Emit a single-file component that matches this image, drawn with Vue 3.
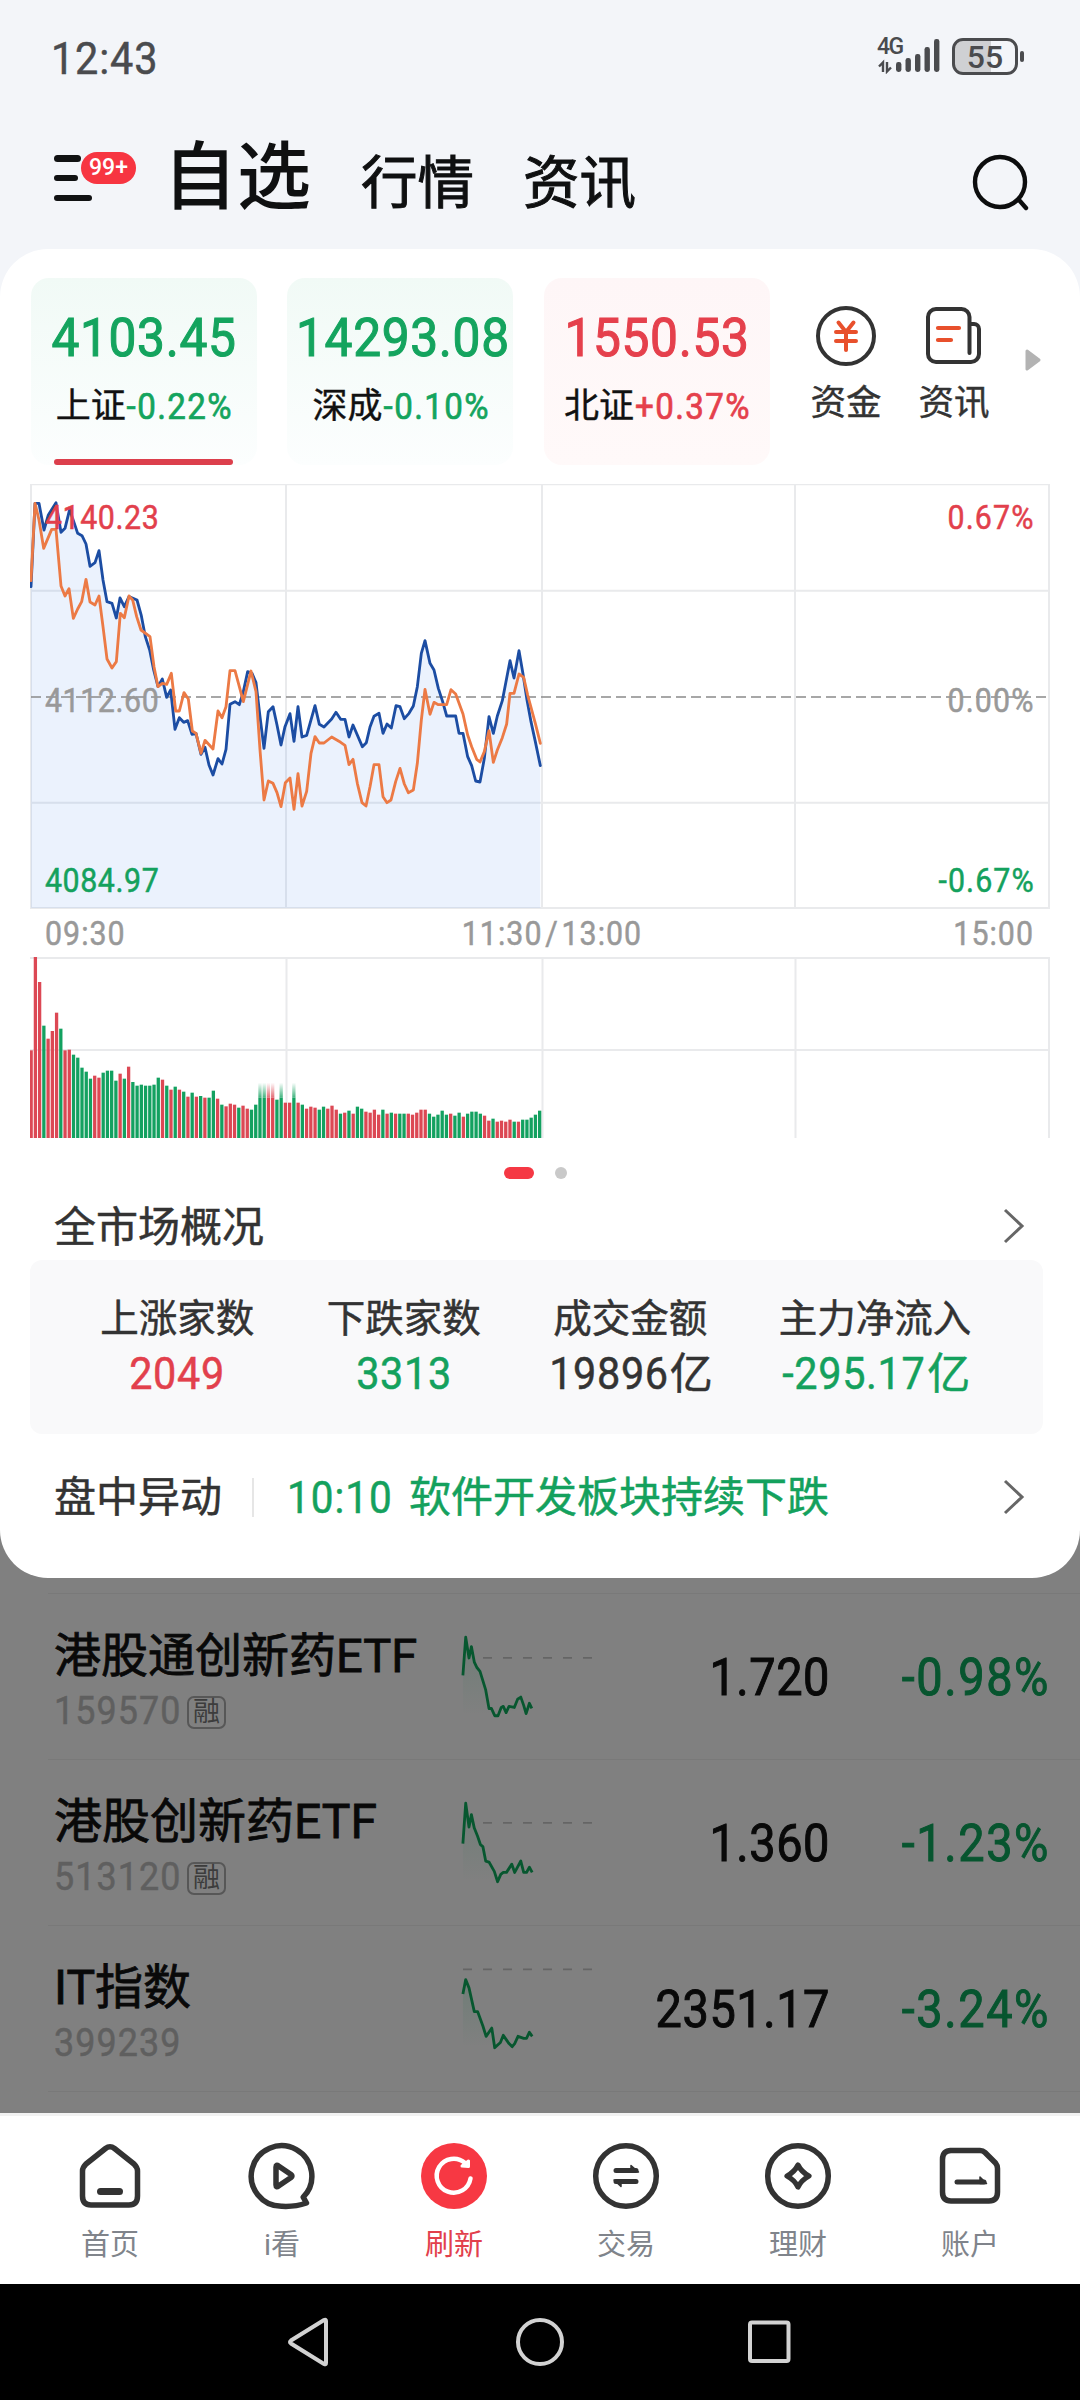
<script setup>
const indices = [
  { name: '上证', value: '4103.45', pct: '-0.22%', trend: 'down', active: true },
  { name: '深成', value: '14293.08', pct: '-0.10%', trend: 'down' },
  { name: '北证', value: '1550.53', pct: '+0.37%', trend: 'up' },
]

const market = [
  { label: '上涨家数', value: '2049', tone: 'red' },
  { label: '下跌家数', value: '3313', tone: 'green' },
  { label: '成交金额', value: '19896', unit: '亿', tone: 'dark' },
  { label: '主力净流入', value: '-295.17', unit: '亿', tone: 'green' },
]

const priceLine =
  '33,350 45,100 57,100 72,180 85,135 108,98 123,187 135,175 149,118 173,190 186,197 198,222 210,289 225,278 237,242 249,330 261,395 276,400 289,444 300,384 313,410 327,380 351,390 364,437 376,500 389,540 401,600 414,650 427,627 440,682 452,660 465,778 478,743 491,757 503,752 516,793 528,790 543,853 555,832 567,885 579,915 594,866 606,882 618,838 630,703 645,695 658,704 670,665 683,605 696,610 708,638 720,740 732,835 745,725 759,710 771,765 783,825 795,770 810,731 822,814 834,710 846,801 860,796 885,707 898,763 912,771 935,747 948,727 962,748 975,748 987,801 999,765 1027,830 1039,818 1050,771 1062,739 1077,730 1089,790 1101,762 1114,774 1128,707 1140,710 1153,746 1167,730 1180,708 1192,650 1204,550 1215,512 1230,580 1242,600 1255,655 1268,695 1280,738 1307,738 1317,790 1329,790 1343,860 1355,887 1367,933 1380,936 1393,865 1407,740 1420,790 1432,738 1447,692 1470,572 1482,624 1497,542 1509,612 1521,690 1533,755 1546,815 1561,887'

const averageLine =
  '33,332 45,100 57,150 71,235 95,178 108,178 123,348 135,378 147,356 160,445 173,417 185,395 198,328 210,396 225,405 237,378 249,470 261,567 276,594 289,575 301,430 313,443 327,378 338,390 350,440 363,480 390,500 402,590 414,650 427,640 440,643 454,610 467,723 478,723 492,668 505,687 517,783 528,790 543,850 555,811 579,837 594,723 606,743 618,710 630,602 645,602 658,650 670,695 693,603 708,665 720,840 732,990 745,933 759,940 771,968 783,1010 796,938 810,924 822,1018 834,911 846,1008 860,964 873,850 885,800 898,819 912,819 935,801 962,817 975,826 987,884 999,868 1012,940 1026,998 1038,1008 1050,950 1062,884 1077,884 1089,980 1101,998 1113,990 1127,935 1140,895 1153,942 1165,968 1180,960 1192,880 1204,750 1215,658 1230,733 1242,697 1255,704 1280,704 1293,659 1307,672 1329,732 1343,795 1355,830 1370,868 1380,876 1393,845 1407,782 1420,877 1432,840 1447,803 1460,762 1470,670 1482,670 1497,612 1511,622 1523,675 1546,760 1561,820'

// One entry per minute: height in thirds of a pixel, direction, and * for a fading tip.
const volumes = (
  '263r 547r 468r 337g 298r 321r 376r 328g 263r 265r 250g 241g 211g 199g 178g 187r 181r 196g 202g 202g 172g 193r 178g 214r ' +
  '168g 157g 160g 157g 157g 160g 181g 175r 157g 145r 154g 145r 139g 124r 136g 124r 126g 121r 121g 142g 118r 100g 95r 103r ' +
  '100r 91g 97r 88r 85g 100g 121g* 121g* 121r* 121r* 115g 121g* 106r 106r 121g* 106r 100g 88r 94r 91r 85g 94g 88r 97r 85r ' +
  '73g 76r 82g 73r 94g 88g 79r 76r 85r 70r 85g 73r 76g 73r 73g 73g 73r 70r 76r 85r 85r 73g 64g 70g 82g 70g 73r 67g 76g ' +
  '64r 73g 79g 79g 73g 67r 52r 58g 49r 52r 49r 55r 49g 49r 55g 55g 61g 70g 82g'
).split(' ')
const pitch = 508.5 / (volumes.length - 1)
const bars = volumes.map((v, i) => ({
  x: 1 + i * pitch - 1.5,
  h: parseInt(v) / 3,
  fill: v.includes('r') ? '#dc4854' : '#13a160',
  tip: v.includes('*') ? (v.includes('r') ? 'url(#tipRed)' : 'url(#tipGreen)') : '',
}))

const stocks = [
  {
    name: '港股通创新药ETF', code: '159570', margin: true, price: '1.720', pct: '-0.98%', base: 62, from: 23, tight: true,
    line: '2.9,79 5.7,42 9,62 11.4,51 14.3,66 16.7,71 20,75 25.7,93 29,111 31.4,111 34.7,118 38,118 41.2,110 43.3,109 46.1,115 49,109 54.3,110 57.6,102 60.8,100 63.7,108 66.1,116 69.4,106 71.8,111',
  },
  {
    name: '港股创新药ETF', code: '513120', margin: true, price: '1.360', pct: '-1.23%', base: 61, from: 23,
    line: '2.9,81 5.7,42 9,65 11.4,53 14.3,66 17.6,74 20.4,82 22.9,84 25.7,98 29,99 34.3,108 37.6,118 40.8,111 43.3,109 46.5,109 51.8,101 54.7,109 60.8,98 63.7,109 66.5,109 69.4,104 72.2,109',
  },
  {
    name: 'IT指数', code: '399239', margin: false, price: '2351.17', pct: '-3.24%', base: 42, from: 3,
    line: '2.9,66 5.7,52 9,60 14.3,83 17.6,83 22.9,97 26.1,107 31.8,99 34.7,118 40.4,113 43.3,106 49,114 52.2,117 54.7,114 58,107 63.7,109 66.5,109 69.4,103 72.2,107',
  },
]

const tabs = [
  { id: 'home', label: '首页' },
  { id: 'watch', label: 'i看' },
  { id: 'refresh', label: '刷新', active: true },
  { id: 'trade', label: '交易' },
  { id: 'wealth', label: '理财' },
  { id: 'account', label: '账户' },
]
</script>

<template>
  <div class="screen">
    <div class="status">
      <span class="clock">12:43</span>
      <div class="status-right">
        <div class="signal">
          <span class="net">4G</span>
          <svg width="66" height="36" viewBox="0 0 66 36">
            <g fill="#4a4b4e">
              <rect x="18" y="24" width="5.4" height="10" rx="2.4" />
              <rect x="27.5" y="20" width="5.4" height="14" rx="2.4" />
              <rect x="37" y="16" width="5.4" height="18" rx="2.4" />
              <rect x="46.5" y="9" width="5.4" height="25" rx="2.4" />
              <rect x="56" y="1" width="5.4" height="33" rx="2.4" />
            </g>
            <path d="M1 28.5L5 24.500V34M9 24V33.500L13 29.500" fill="none" stroke="#4a4b4e" stroke-width="2.4" />
          </svg>
        </div>
        <div class="battery"><span>55</span></div>
        <i class="nub"></i>
      </div>
    </div>

    <div class="header">
      <div class="menu">
        <i class="m1"></i><i class="m2"></i><i class="m3"></i>
        <span class="badge">99+</span>
      </div>
      <nav class="tabs-top">
        <span class="big">自选</span>
        <span>行情</span>
        <span>资讯</span>
      </nav>
      <svg class="search" width="64" height="64" viewBox="0 0 64 64" fill="none" stroke="#0c0d0e" stroke-width="4.4" stroke-linecap="round">
        <circle cx="30" cy="32" r="25" />
        <path d="M49 50L56 58" />
      </svg>
    </div>

    <section class="card">
      <div class="indices">
        <div v-for="x in indices" :key="x.name" class="index" :class="x.trend">
          <div class="ix-value">{{ x.value }}</div>
          <div class="ix-line"><span class="ix-name">{{ x.name }}</span><span class="ix-pct">{{ x.pct }}</span></div>
          <i v-if="x.active" class="underline"></i>
        </div>
        <div class="quick q1">
          <svg width="64" height="64" viewBox="0 0 64 64" fill="none" stroke-linecap="round">
            <circle cx="32" cy="32" r="28" stroke="#333" stroke-width="4" />
            <path d="M24.500 18.500L32 28L39.500 18.500M22 28H42M22 37H42M32 28V46" stroke="#e8502c" stroke-width="4" />
          </svg>
          <span>资金</span>
        </div>
        <div class="quick q2">
          <svg width="64" height="64" viewBox="0 0 64 64" fill="none" stroke-linecap="round">
            <path d="M47.500 49V13A8 8 0 0 0 39.500 5H14A8 8 0 0 0 6 13V50A8 8 0 0 0 14 58H49A8 8 0 0 0 57 50V25A5 5 0 0 0 52 20H48" stroke="#333" stroke-width="4" />
            <path d="M16 24H37M16 36H29" stroke="#e8502c" stroke-width="4.200" />
          </svg>
          <span>资讯</span>
        </div>
        <svg class="more" width="18" height="24" viewBox="0 0 18 24"><path d="M3 3L15 12L3 21Z" fill="#b3b3b3" stroke="#b3b3b3" stroke-width="3" stroke-linejoin="round" /></svg>
      </div>

      <div class="chart">
        <svg width="1020" height="426" viewBox="30 42 3060 1278" fill="none">
          <path d="M33 43H3087V1314H33ZM33 362H3087M33 998H3087M798 43V1314M1566 43V1314M2325 43V1314" stroke="#e9eaec" stroke-width="6" />
          <polygon :points="`33,1314 ${priceLine} 1561,1314`" fill="#3d7ef0" fill-opacity=".1" />
          <path d="M33 681H3087" stroke="#8a8a8a" stroke-width="5" stroke-dasharray="30 15" />
          <g stroke-width="8.500" stroke-linejoin="round" stroke-linecap="round">
            <polyline :points="priceLine" stroke="#1c4da3" />
            <polyline :points="averageLine" stroke="#ec7a45" />
          </g>
        </svg>
        <div class="scale">
          <div><span class="red">4140.23</span><span class="red">0.67%</span></div>
          <div><span>4112.60</span><span>0.00%</span></div>
          <div><span class="green">4084.97</span><span class="green">-0.67%</span></div>
        </div>
      </div>
      <div class="times"><span>09:30</span><span class="mid">11:30<b>/</b>13:00</span><span>15:00</span></div>
      <svg class="volume" width="1020" height="181" viewBox="0 0 1020 181">
        <defs>
          <linearGradient id="tipRed" x1="0" y1="0" x2="0" y2="1"><stop offset="0" stop-color="#dc4854" stop-opacity="0" /><stop offset="1" stop-color="#dc4854" stop-opacity=".8" /></linearGradient>
          <linearGradient id="tipGreen" x1="0" y1="0" x2="0" y2="1"><stop offset="0" stop-color="#13a160" stop-opacity="0" /><stop offset="1" stop-color="#13a160" stop-opacity=".8" /></linearGradient>
        </defs>
        <path d="M0 1H1020M0 93H1020M256.500 0V181M512.500 0V181M765.500 0V181M1019 0V181" fill="none" stroke="#e9eaec" stroke-width="2" />
        <g v-for="(b, i) in bars" :key="i">
          <rect :x="b.x" :y="181 - b.h" width="3.300" :height="b.h" :fill="b.fill" />
          <rect v-if="b.tip" :x="b.x" :y="181 - b.h - 15" width="3.300" height="15" :fill="b.tip" />
        </g>
      </svg>
      <div class="pager"><i></i><i></i></div>

      <div class="title-row">
        <span>全市场概况</span>
        <svg width="24" height="40" viewBox="0 0 24 40"><path d="M3 4L20 20L3 36" fill="none" stroke="#666" stroke-width="3" /></svg>
      </div>
      <div class="panel">
        <div v-for="m in market" :key="m.label" class="stat">
          <div class="st-label">{{ m.label }}</div>
          <div class="st-value" :class="m.tone"><b>{{ m.value }}</b><small v-if="m.unit">{{ m.unit }}</small></div>
        </div>
      </div>
      <div class="alert">
        <span>盘中异动</span><i></i><span class="time">10:10</span><span class="news">软件开发板块持续下跌</span>
        <svg width="24" height="40" viewBox="0 0 24 40"><path d="M3 4L20 20L3 36" fill="none" stroke="#666" stroke-width="3" /></svg>
      </div>
    </section>

    <section class="list">
      <div v-for="s in stocks" :key="s.code" class="stock">
        <div class="who">
          <div class="name" :class="{ tight: s.tight }">{{ s.name }}</div>
          <div class="code"><span>{{ s.code }}</span><em v-if="s.margin">融</em></div>
        </div>
        <svg width="140" height="165" viewBox="0 0 140 160" preserveAspectRatio="none" fill="none">
          <defs><linearGradient id="spark" x1="0" y1="0" x2="0" y2="1"><stop offset="0" stop-color="#0a6b40" stop-opacity=".14" /><stop offset="1" stop-color="#0a6b40" stop-opacity="0" /></linearGradient></defs>
          <polygon :points="`${s.line} 34,116 2.9,116`" fill="url(#spark)" />
          <path :d="`M${s.from} ${s.base}H132`" stroke="#656565" stroke-width="1.800" stroke-dasharray="9 11" />
          <polyline :points="s.line" stroke="#07572f" stroke-width="2.800" stroke-linejoin="round" />
        </svg>
        <div class="price">{{ s.price }}</div>
        <div class="pct">{{ s.pct }}</div>
      </div>
      <div class="stock last"></div>
    </section>

    <nav class="nav">
      <div v-for="t in tabs" :key="t.id" class="tab" :class="{ active: t.active }">
        <svg width="72" height="72" viewBox="0 0 72 72" fill="none" stroke="#333" stroke-width="5.500" stroke-linejoin="round" stroke-linecap="round">
          <template v-if="t.id === 'home'">
            <path d="M31.500 8.500Q36 5 40.500 8.500L60 24Q63.500 27.500 63.500 31V56Q63.500 65 55 65H17Q8.500 65 8.500 56V31Q8.500 27.500 12 24Z" />
            <path d="M26.500 51.500H45.500" stroke-width="7" />
          </template>
          <template v-else-if="t.id === 'watch'">
            <path d="M57.200 57.200A30.300 30.300 0 1 0 36 66.300Q49 67 60.500 63Z" />
            <path d="M30 27V45Q30 48 32.500 46L45 37.500Q47 36 45 34.500L32.500 26Q30 24 30 27Z" />
          </template>
          <template v-else-if="t.id === 'refresh'">
            <circle cx="36" cy="36" r="33" fill="#f73843" stroke="none" />
            <path d="M52.500 38.500A17 17 0 1 1 47 23" stroke="#fff" stroke-width="4.500" />
            <path d="M44 26L50.500 21V26.500Z" fill="#fff" stroke="#fff" stroke-width="3" />
          </template>
          <template v-else-if="t.id === 'trade'">
            <circle cx="36" cy="36" r="30.300" />
            <path d="M26 30.500H46M26 41.500H46" stroke-width="5" />
            <path d="M41 25.500L48.500 32H41ZM31 46.500L24 40H31Z" fill="#333" stroke-width="1.500" />
          </template>
          <template v-else-if="t.id === 'wealth'">
            <circle cx="36" cy="36" r="30.300" />
            <path d="M36 25Q39.500 32 47 36Q39.500 40 36 47Q32.500 40 25 36Q32.500 32 36 25Z" stroke-width="5.200" />
          </template>
          <template v-else>
            <path d="M16 10.500H46Q49 10.500 51 12.500L61.500 23Q63.500 25.500 63.500 28.500V52Q63.500 61 55 61H17Q8.500 61 8.500 52V19.500Q8.500 10.500 17 10.500Z" />
            <path d="M23 42H50" stroke-width="5" />
            <path d="M46 37L52.500 43.500H46Z" fill="#333" stroke-width="1.500" />
          </template>
        </svg>
        <span>{{ t.label }}</span>
      </div>
    </nav>

    <div class="system">
      <svg width="48" height="52" viewBox="0 0 48 52"><path d="M41 5V47Q41 49 39 48L6 27.500Q4 26 6 24.500L39 4Q41 3 41 5Z" /></svg>
      <svg width="52" height="52" viewBox="0 0 52 52"><circle cx="26" cy="26" r="22" /></svg>
      <svg width="48" height="52" viewBox="0 0 48 52"><rect x="3" y="6.500" width="38.500" height="38.500" rx="2" /></svg>
    </div>
  </div>
</template>

<style>
body { margin: 0; }
</style>

<style scoped>
.screen {
  width: 1080px;
  height: 2400px;
  overflow: hidden;
  background: linear-gradient(#f3f5f9 900px, #808080 900px);
  font-family: Roboto, "Noto Sans CJK SC", sans-serif;
  color: #333;
  display: flex;
  flex-direction: column;
}
i, em { display: block; font-style: normal; }
svg { display: block; flex: none; }
.red { color: #e2404c; }
.green { color: #14a15d; }
.dark { color: #333; }

/* Figures are set condensed, with open tracking. */
.clock, .ix-value, .ix-pct, .scale span, .times span, .st-value b, .time, .code span, .price, .pct {
  transform: scaleX(.92);
  -webkit-text-stroke: .500px currentColor;
}
.clock, .scale span:first-child, .times span:first-child, .time, .code span { transform-origin: left; }
.scale span:last-child, .times span:last-child, .price, .pct { transform-origin: right; }

.status { height: 112px; display: flex; justify-content: space-between; padding: 0 56px 0 51px; box-sizing: border-box; color: #4a4b4e; }
.clock { font-size: 45px; line-height: 118px; letter-spacing: .900px; }
.status-right { display: flex; align-items: center; }
.signal { position: relative; width: 66px; height: 36px; margin-right: 8px; }
.net { position: absolute; left: -1px; top: -3px; font-size: 23px; line-height: 24px; font-weight: 500; letter-spacing: -1.5px; }
.battery { width: 66px; height: 37px; box-sizing: border-box; border: 3px solid #4a4b4e; border-radius: 11px; background: linear-gradient(90deg, #cfd0d3 60%, transparent 60%); text-align: center; font-size: 32px; line-height: 32px; font-weight: 500; }
.nub { width: 4px; height: 11px; border-radius: 2px; background: #4a4b4e; margin-left: 2px; }

.header { height: 137px; display: flex; align-items: flex-start; padding-left: 54px; color: #0f1011; }
.menu { position: relative; width: 109px; padding-top: 43px; }
.menu i { height: 6.500px; border-radius: 4px; background: #111213; margin-bottom: 13.300px; }
.m1 { width: 27px; }
.m2 { width: 24px; }
.m3 { width: 38px; }
.badge { position: absolute; left: 27px; top: 40px; width: 55px; height: 32px; border-radius: 16px; background: #f73541; color: #fff; font-size: 23px; font-weight: 500; line-height: 32px; text-align: center; }
.tabs-top { flex: 1; display: flex; align-items: baseline; font-size: 56.500px; line-height: 80px; margin-top: 26px; -webkit-text-stroke: 1px currentColor; }
.tabs-top span { margin-right: 49px; }
.tabs-top .big { font-size: 74px; line-height: 80px; margin-right: 50px; font-weight: 500; -webkit-text-stroke: 0; }
.search { margin: 38px 46px 0 0; }

.card { height: 1329px; background: #fff; border-radius: 48px; padding-top: 29px; box-sizing: border-box; flex: none; }
.indices { display: flex; height: 187px; padding-left: 30.500px; }
.index { position: relative; width: 226px; margin-right: 30.800px; border-radius: 18px; text-align: center; white-space: nowrap; flex: none; }
.index.down { background: linear-gradient(#f1faf6, #fcfefe); color: #14a45e; }
.index.up { background: linear-gradient(#fef6f7, #fff9f9); color: #e5404c; }
.ix-value { font-size: 54px; line-height: 60px; letter-spacing: .700px; margin-top: 30px; -webkit-text-stroke-width: 1.100px; }
.ix-line { display: flex; justify-content: center; font-size: 36px; line-height: 40px; margin-top: 19px; }
.ix-pct { letter-spacing: 1.500px; margin: 0 -6px 0 -4px; -webkit-text-stroke-width: .700px; }
.ix-name { font-size: 35px; color: #111; -webkit-text-stroke: .400px #111; }
.underline { position: absolute; left: 23px; right: 24px; bottom: 0; height: 6px; border-radius: 3px; background: #dc3f4c; }
.quick { width: 72px; display: flex; flex-direction: column; align-items: center; font-size: 35.500px; line-height: 44px; color: #333; padding-top: 26px; flex: none; }
.quick span { margin-top: 13px; white-space: nowrap; -webkit-text-stroke: .400px #333; }
.q1 { margin-left: 9px; }
.q2 { margin-left: 36px; }
.more { margin: 70px 0 0 34px; }

.chart { position: relative; width: 1020px; height: 424px; margin: 19px 0 0 30px; }
.scale { position: absolute; inset: 0; font-size: 33px; line-height: 41px; color: #999; letter-spacing: .600px; }
.scale div { display: flex; justify-content: space-between; padding: 13px 15px 0 15px; }
.scale div + div { padding-top: 142px; }
.scale div + div + div { padding-top: 139px; }
.scale span:last-child { letter-spacing: 1.200px; }
.times { height: 49px; line-height: 51px; display: flex; justify-content: space-between; margin: 0 46px 0 45px; font-size: 33px; color: #999; }
.times span { width: 200px; letter-spacing: 1.100px; }
.times span:last-child { text-align: right; }
.times .mid { text-align: center; margin-left: 24px; white-space: nowrap; }
.times b { font-weight: 400; margin: 0 3px; }
.volume { margin-left: 30px; }
.pager { height: 54px; box-sizing: border-box; padding: 29px 0 0 504px; display: flex; }
.pager i { width: 12px; height: 12px; border-radius: 6px; background: #c9c9c9; }
.pager i:first-child { width: 30px; background: #f53844; margin-right: 21px; }

.title-row { height: 68px; display: flex; align-items: center; justify-content: space-between; padding: 0 54px; font-size: 42px; line-height: 68px; }
.title-row span, .st-label, .st-value small, .alert span { -webkit-text-stroke: .500px currentColor; }
.title-row span { padding-top: 3px; }
.panel { height: 174px; width: 1013px; margin-left: 30px; border-radius: 12px; background: #f9f9fa; box-sizing: border-box; padding: 32px 0 0 34px; display: flex; }
.stat { width: 226.500px; text-align: center; white-space: nowrap; flex: none; }
.stat:last-child { width: 263px; }
.st-label { font-size: 38.500px; line-height: 54px; }
.st-value { font-size: 45px; line-height: 55px; }
.st-value b { display: inline-block; font-weight: 400; letter-spacing: .700px; margin: 0 -4px; }
.st-value small { font-size: 43px; }
.alert { height: 126px; display: flex; align-items: center; padding: 0 54px; font-size: 42px; line-height: 60px; }
.alert span { padding-top: 2px; }
.alert i { width: 2px; height: 39px; background: #e6e6e6; margin: 0 33px 0 30px; }
.alert .time { color: #14a15d; font-size: 44px; letter-spacing: 1.100px; width: 122px; }
.alert .news { color: #14a15d; flex: 1; }

.list { height: 535px; box-sizing: border-box; padding: 15px 0 0 48px; overflow: hidden; flex: none; }
.stock { height: 166.100px; box-sizing: border-box; border-top: 1.500px solid #797979; display: flex; align-items: flex-start; color: #090909; }
.who { width: 412px; padding: 34px 0 0 6px; box-sizing: border-box; white-space: nowrap; }
.name { font-size: 48px; line-height: 56px; -webkit-text-stroke: .800px currentColor; }
.name.tight { font-size: 47px; }
.code { display: flex; align-items: center; margin-top: 7px; height: 40px; font-size: 39px; line-height: 40px; color: #5f5f5f; }
.code span { letter-spacing: 1.200px; width: 125px; }
.code em { margin: 2px 0 0 8px; width: 39px; height: 33px; box-sizing: border-box; border: 2px solid #575757; border-radius: 7px; font-size: 27px; line-height: 28px; text-align: center; color: #3c3c3c; }
.price, .pct { font-size: 51px; line-height: 168px; text-align: right; -webkit-text-stroke-width: 1px; flex: none; }
.price { width: 230px; letter-spacing: .600px; }
.pct { width: 220px; color: #07552f; letter-spacing: 1.700px; }

.nav { height: 171px; box-sizing: border-box; background: #fff; border-top: 3px solid #f1f1f1; display: flex; padding: 24px 24px 0; flex: none; }
.tab { width: 172px; display: flex; flex-direction: column; align-items: center; font-size: 29px; line-height: 36px; color: #80848b; }
.tab span { margin-top: 15px; }
.tab.active { color: #e2404c; }

.system { height: 116px; background: #000; display: flex; align-items: center; justify-content: center; gap: 181px; flex: none; }
.system svg { fill: none; stroke: #d2d2d2; stroke-width: 4; }
</style>
